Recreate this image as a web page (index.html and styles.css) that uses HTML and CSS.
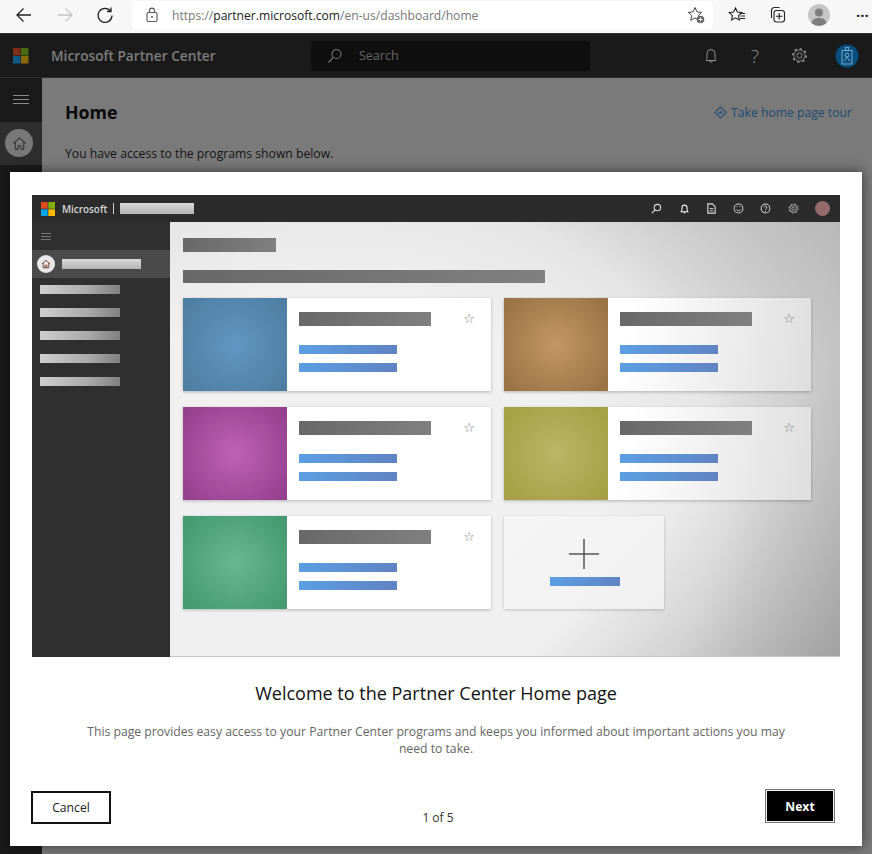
FILE: index.html
```html
<!DOCTYPE html>
<html lang="en">
<head>
  <meta charset="UTF-8" />
  <title>Microsoft Partner Center</title>
  <link rel="stylesheet" href="styles.css">
</head>
<body>
  <div class="browser">
    <button class="nav-btn back"><svg width="18" height="18" viewBox="0 0 18 18"><path d="M16 9H2M8.5 2.5 2 9l6.5 6.5" fill="none" stroke="#222" stroke-width="1.3"/></svg></button>
    <button class="nav-btn forward"><svg width="18" height="18" viewBox="0 0 18 18"><path d="M2 9h14M9.5 2.5 16 9l-6.5 6.5" fill="none" stroke="#c4c4c4" stroke-width="1.3"/></svg></button>
    <button class="nav-btn reload"><svg width="18" height="18" viewBox="0 0 18 18"><path d="M14.6 5.2A7 7 0 1 0 16 9.5M15 1.5v4h-4" fill="none" stroke="#222" stroke-width="1.3"/></svg></button>
    <div class="address">
      <svg class="lock" width="14" height="16" viewBox="0 0 14 16"><rect x="2" y="5.5" width="10" height="9" rx="1.5" fill="none" stroke="#555" stroke-width="1.1"/><path d="M4.5 5.5V3.6a2.5 2.5 0 0 1 5 0v1.9" fill="none" stroke="#555" stroke-width="1.1"/><circle cx="7" cy="10" r="1" fill="#555"/></svg>
      <span class="url">https://<b>partner.microsoft.com</b>/en-us/dashboard/home</span>
      <svg class="fav-add" width="18" height="18" viewBox="0 0 18 18"><path d="M8 1.5l2 4.4 4.7.5-3.5 3.2 1 4.7L8 11.9l-4.2 2.4 1-4.7L1.300 6.400 6 5.900z" fill="none" stroke="#444" stroke-width="1"/><circle cx="13.500" cy="13.500" r="3.800" fill="#666"/><path d="M13.500 11.500v4M11.500 13.500h4" stroke="#fff" stroke-width="1"/></svg>
    </div>
    <div class="tools">
      <svg width="18" height="18" viewBox="0 0 18 18"><path d="M7.500 2l1.900 4.100 4.400.5-3.300 3 .9 4.400-3.900-2.200-3.900 2.200.9-4.400-3.300-3 4.400-.5z" fill="none" stroke="#222" stroke-width="1.100"/><path d="M12 7.500h5M12.500 10h4.500M12 12.500h5" stroke="#222" stroke-width="1"/></svg>
      <svg width="18" height="18" viewBox="0 0 18 18"><path d="M3.500 12V4.500a3 3 0 0 1 3-3h5" fill="none" stroke="#222" stroke-width="1.100"/><rect x="6" y="4.500" width="10.500" height="11.500" rx="2.500" fill="none" stroke="#222" stroke-width="1.100"/><path d="M11.200 7v6.500M8 10.200h6.500" stroke="#222" stroke-width="1.100"/></svg>
      <svg class="person" width="22" height="22" viewBox="0 0 22 22"><circle cx="11" cy="11" r="11" fill="#c6c6c6"/><circle cx="11" cy="8.500" r="4" fill="#7d7d7d"/><path d="M3.500 19c1-4 4-5 7.500-5s6.500 1 7.500 5a11 11 0 0 1-15 0z" fill="#7d7d7d"/></svg>
      <span class="more">···</span>
    </div>
  </div>

  <div class="app">
    <header class="app-head">
      <svg class="ms-logo" width="16" height="16" viewBox="0 0 16 16"><rect width="7.500" height="7.500" fill="#7f2f17"/><rect x="8" width="7.500" height="7.500" fill="#476b10"/><rect y="8" width="7.500" height="7.500" fill="#0f5a82"/><rect x="8" y="8" width="7.500" height="7.500" fill="#8a6a0a"/></svg>
      <span class="app-name">Microsoft Partner Center</span>
      <div class="search">
        <svg width="16" height="16" viewBox="0 0 16 16"><circle cx="9.500" cy="6" r="4.500" fill="none" stroke="#777" stroke-width="1.100"/><path d="M6.300 9.300 1.500 14.500" stroke="#777" stroke-width="1.200"/></svg>
        <span>Search</span>
      </div>
      <div class="head-icons">
        <svg width="16" height="18" viewBox="0 0 16 18"><path d="M3 13.500c1-1 1-2 1-7a4 4 0 0 1 8 0c0 5 0 6 1 7zM6.300 13.500a1.700 1.700 0 0 0 3.400 0" fill="none" stroke="#8f8f8f" stroke-width="1"/></svg>
        <span class="help">?</span>
        <svg width="17" height="17" viewBox="0 0 17 17"><circle cx="8.500" cy="8.500" r="2.600" fill="none" stroke="#8f8f8f"/><circle cx="8.500" cy="8.500" r="5.600" fill="none" stroke="#8f8f8f" stroke-width="1"/><circle cx="8.500" cy="8.500" r="6.800" fill="none" stroke="#8f8f8f" stroke-width="1.600" stroke-dasharray="2.200 3.140"/></svg>
        <svg class="badge" width="24" height="24" viewBox="0 0 24 24"><circle cx="12" cy="12" r="11.500" fill="#054f7e"/><rect x="7" y="6.500" width="10" height="13.500" fill="none" stroke="#7fa6c2"/><circle cx="12" cy="11" r="2" fill="none" stroke="#7fa6c2"/><path d="M9 17.500 12 13l3 4.500M10 3.500h4l-1 3h-2z" fill="none" stroke="#7fa6c2"/></svg>
      </div>
    </header>
    <div class="app-body">
      <nav class="rail">
        <div class="rail-menu"><span></span><span></span><span></span></div>
        <div class="rail-home">
          <div class="rail-circle"><svg width="15" height="15" viewBox="0 0 16 16"><path d="M1.500 8 8 2l6.500 6M3.500 6.500V14h3v-3.500h3V14h3V6.500" fill="none" stroke="#333" stroke-width="1.100"/></svg></div>
        </div>
      </nav>
      <main class="page">
        <div class="page-top">
          <h1>Home</h1>
          <a class="tour"><svg width="13" height="13" viewBox="0 0 14 14"><path d="M7 1l6 6-6 6-6-6z" fill="none" stroke="#1f4a73" stroke-width="1.100"/><path d="M5 9V6.800h3.500M7.300 5l1.700 1.800-1.700 1.800" fill="none" stroke="#1f4a73"/></svg>Take home page tour</a>
        </div>
        <p class="access">You have access to the programs shown below.</p>
      </main>
    </div>
  </div>

  <section class="modal">
    <div class="shot">
      <div class="shot-bar">
        <svg width="14" height="14" viewBox="0 0 14 14"><rect width="6.700" height="6.700" fill="#e04a1f"/><rect x="7.300" width="6.700" height="6.700" fill="#7fb000"/><rect y="7.300" width="6.700" height="6.700" fill="#00a2ec"/><rect x="7.300" y="7.300" width="6.700" height="6.700" fill="#fdb800"/></svg>
        <span class="shot-brand">Microsoft</span>
        <span class="shot-sep"></span>
        <span class="blur-light shot-product"></span>
        <div class="shot-icons">
          <svg width="11" height="11" viewBox="0 0 12 12"><circle cx="7" cy="5" r="3.500" fill="none" stroke="#ddd" stroke-width="1.200"/><path d="M4.500 7.500 1 11" stroke="#ddd" stroke-width="1.300"/></svg>
          <svg width="11" height="11" viewBox="0 0 12 12"><path d="M2.500 9.500c.8-1 .8-2 .8-4.500a2.700 2.700 0 0 1 5.400 0c0 2.500 0 3.500.8 4.500zM5 10.500h2" fill="none" stroke="#eee" stroke-width="1.200"/></svg>
          <svg width="11" height="11" viewBox="0 0 12 12"><path d="M2 1h5l3 3v7H2z" fill="none" stroke="#ddd" stroke-width="1.200"/><path d="M4 6h4M4 8.500h4" stroke="#ddd"/></svg>
          <svg width="11" height="11" viewBox="0 0 12 12"><circle cx="6" cy="6" r="4.800" fill="none" stroke="#ccc" stroke-width="1.100"/><path d="M3.500 7c1 2 4 2 5 0M4 4h1M7 4h1" stroke="#ccc" fill="none"/></svg>
          <svg width="11" height="11" viewBox="0 0 12 12"><circle cx="6" cy="6" r="4.800" fill="none" stroke="#ccc" stroke-width="1.100"/><path d="M4.500 4.800a1.500 1.500 0 1 1 2 1.400L6 7v.6M6 8.500v1" stroke="#ccc" fill="none"/></svg>
          <svg width="11" height="11" viewBox="0 0 12 12"><circle cx="6" cy="6" r="1.700" fill="none" stroke="#bbb"/><circle cx="6" cy="6" r="4" fill="none" stroke="#bbb" stroke-width=".9"/><circle cx="6" cy="6" r="5" fill="none" stroke="#bbb" stroke-width="1" stroke-dasharray="1.900 2.020"/></svg>
          <span class="shot-avatar"></span>
        </div>
      </div>
      <div class="shot-main">
        <aside class="shot-side">
          <div class="shot-burger"><span></span><span></span><span></span></div>
          <div class="shot-active">
            <span class="shot-circle"><svg width="10" height="10" viewBox="0 0 16 16"><path d="M1.500 8 8 2l6.500 6M3.500 6.500V14h9V6.500M6.500 14v-4h3v4" fill="none" stroke="#7a4a40" stroke-width="1.600"/></svg></span>
            <span class="blur-light side-first"></span>
          </div>
          <div class="shot-links">
            <span class="blur-mid"></span>
            <span class="blur-mid"></span>
            <span class="blur-mid"></span>
            <span class="blur-mid"></span>
            <span class="blur-mid"></span>
          </div>
        </aside>
        <div class="shot-content">
          <div class="blur-dark shot-title"></div>
          <div class="blur-dark shot-sub"></div>
          <div class="shot-grid">
            <div class="card"><div class="tile tile-blue"></div><div class="card-body"><span class="blur-dark card-title"></span><span class="blur-blue first"></span><span class="blur-blue"></span><span class="star">☆</span></div></div>
            <div class="card"><div class="tile tile-brown"></div><div class="card-body"><span class="blur-dark card-title"></span><span class="blur-blue first"></span><span class="blur-blue"></span><span class="star">☆</span></div></div>
            <div class="card"><div class="tile tile-purple"></div><div class="card-body"><span class="blur-dark card-title"></span><span class="blur-blue first"></span><span class="blur-blue"></span><span class="star">☆</span></div></div>
            <div class="card"><div class="tile tile-olive"></div><div class="card-body"><span class="blur-dark card-title"></span><span class="blur-blue first"></span><span class="blur-blue"></span><span class="star">☆</span></div></div>
            <div class="card"><div class="tile tile-green"></div><div class="card-body"><span class="blur-dark card-title"></span><span class="blur-blue first"></span><span class="blur-blue"></span><span class="star">☆</span></div></div>
            <div class="add-card">
              <svg width="32" height="32" viewBox="0 0 32 32"><path d="M16 1v30M1 16h30" stroke="#555" stroke-width="1.500"/></svg>
              <span class="blur-blue add-link"></span>
            </div>
          </div>
        </div>
      </div>
    </div>
    <h2>Welcome to the Partner Center Home page</h2>
    <p class="intro">This page provides easy access to your Partner Center programs and keeps you informed about important actions you may need to take.</p>
    <div class="modal-foot">
      <button class="btn-cancel">Cancel</button>
      <span class="step">1 of 5</span>
      <button class="btn-next">Next</button>
    </div>
  </section>
</body>
</html>
```

FILE: styles.css
```css
* { box-sizing: border-box; }
html, body { margin: 0; height: 100%; }
body { width: 872px; height: 854px; overflow: hidden; font-family: "Open Sans", "Noto Sans", sans-serif; background: #7a7a7a; position: relative; }

/* browser chrome */
.browser { height: 33px; background: #f7f7f7; display: flex; align-items: center; padding-bottom: 3px; }
.nav-btn { width: 18px; height: 18px; padding: 0; border: 0; background: none; display: flex; }
.back { margin-left: 15px; }
.forward { margin-left: 23px; }
.reload { margin-left: 22px; }
.address { margin-left: 18px; width: 581px; height: 28px; background: #fff; border-radius: 4px; display: flex; align-items: center; padding: 0 8px 0 13px; }
.lock { flex: none; }
.url { margin-left: 13px; font-size: 12.1px; color: #777; white-space: nowrap; }
.url b { font-weight: 400; color: #222; }
.fav-add { margin-left: auto; }
.tools { display: flex; align-items: center; margin-left: 15px; }
.tools svg { flex: none; }
.tools svg + svg { margin-left: 22px; }
.tools .person { margin-left: 22px; }
.more { margin-left: 26px; font-size: 15px; font-weight: 700; color: #222; letter-spacing: 0; }

/* dimmed page behind the dialog */
.app-head { height: 45px; background: #1a1a1a; border-top: 1px solid #333; border-bottom: 1px solid #2c2c2c; display: flex; align-items: center; }
.ms-logo { margin-left: 13px; flex: none; }
.app-name { margin-left: 22px; font-size: 13.7px; font-weight: 600; color: #7d7d7d; white-space: nowrap; width: 260px; }
.search { width: 279px; height: 30px; background: #0f0f0f; border-radius: 2px; display: flex; align-items: center; padding-left: 16px; color: #666; font-size: 12.5px; gap: 16px; }
.head-icons { margin-left: auto; display: flex; align-items: center; padding-right: 13px; gap: 31px; }
.help { color: #8f8f8f; font-size: 19px; line-height: 20px; width: 10px; font-weight: 300; text-align: center; }
.badge { margin-left: -4px; }

.app-body { display: flex; height: 776px; }
.rail { width: 42px; background: #1a1a1a; flex: none; }
.rail-menu { height: 44px; padding-bottom: 2px; display: flex; flex-direction: column; justify-content: center; align-items: center; gap: 3px; }
.rail-menu span { width: 16px; height: 1px; background: #8a8a8a; }
.rail-home { height: 43px; background: #2e2e2e; padding: 7px 5px; }
.rail-circle { width: 28px; height: 28px; border-radius: 50%; background: #787878; display: flex; align-items: center; justify-content: center; }
.page { flex: 1; padding: 0 20px 0 23px; background: #7a7a7a; }
.page-top { display: flex; justify-content: space-between; align-items: center; height: 67px; }
.page-top h1 { margin: 0; font-size: 17.800px; font-weight: 700; color: #0a0a0a; }
.tour { display: flex; align-items: center; gap: 4px; margin-top: 1px; font-size: 12.200px; color: #1f4a73; }
.access { margin: 0; font-size: 12.200px; color: #151515; }

/* dialog */
.modal { position: absolute; left: 10px; top: 172px; width: 852px; height: 674px; background: #fff; box-shadow: 0 0 12px rgba(0, 0, 0, .55); padding: 23px 22px 0; display: flex; flex-direction: column; }
.modal h2 { margin: 24px 0 0; text-align: center; font-size: 18px; line-height: 24px; font-weight: 500; color: #111; }
.intro { margin: 18px 50px 0; text-align: center; font-size: 12.200px; line-height: 17px; color: #666; }
.modal-foot { margin: 33px 5px 0 -1px; display: flex; justify-content: space-between; align-items: flex-start; }
.btn-cancel, .btn-next { font-family: inherit; font-size: 12.200px; padding: 0; }
.btn-cancel { width: 80px; height: 33px; margin-top: 1px; background: #fff; border: 2px solid #111; color: #222; }
.btn-next { width: 70px; height: 34px; margin-top: -1px; background: #000; border: 1px solid #777; box-shadow: inset 0 0 0 1px #eee; color: #fff; font-weight: 700; }
.step { margin-top: 20px; font-size: 12px; line-height: 16px; color: #333; }

/* screenshot inside the dialog */
.shot { width: 808px; height: 462px; flex: none; display: flex; flex-direction: column; }
.shot-bar { height: 27px; background: #2b2b2b; display: flex; align-items: center; padding-left: 9px; flex: none; }
.shot-brand { margin-left: 7px; font-size: 9.900px; font-weight: 600; color: #d8d8d8; }
.shot-sep { width: 1px; height: 11px; background: #cfcfcf; margin: 0 6px; }
.shot-product { width: 74px; height: 11px; }
.shot-icons { margin-left: auto; display: flex; align-items: center; gap: 16.300px; padding-right: 10px; }
.shot-avatar { width: 15px; height: 15px; border-radius: 50%; background: #956a6a; }

.blur-light { display: block; background: linear-gradient(180deg, #d8d8d8, #b4b4b4); }
.blur-mid { display: block; width: 80px; height: 9px; background: linear-gradient(100deg, #cfcfcf, #aaa 60%, #808080); }
.blur-dark { display: block; background: linear-gradient(95deg, #686868, #808080); }
.blur-blue { display: block; width: 98px; height: 9px; margin-top: 9px; background: linear-gradient(100deg, #5b9fe3, #6083c2); }

.shot-main { flex: 1; display: flex; min-height: 0; }
.shot-side { width: 138px; background: #2f2f2f; flex: none; }
.shot-burger { height: 28px; padding: 11px 0 0 9px; display: flex; flex-direction: column; gap: 2px; }
.shot-burger span { width: 10px; height: 1px; background: #777; }
.shot-active { height: 28px; background: #4a4a4a; display: flex; align-items: center; padding-left: 5px; gap: 7px; }
.shot-circle { width: 18px; height: 18px; border-radius: 50%; background: #e8e8e8; display: flex; align-items: center; justify-content: center; }
.side-first { width: 79px; height: 10px; }
.shot-links { padding: 7px 0 0 8px; display: flex; flex-direction: column; gap: 14px; }

.shot-content { flex: 1; padding: 16px 0 0 13px; background: linear-gradient(135deg, transparent 72%, rgba(0, 0, 0, .18)), radial-gradient(ellipse 640px 520px at 168px 280px, #f0f0f0 40%, #e6e6e6 60%, #d8d8d8 68%, #c8c8c8 80%, #b8b8b8 95%); border-bottom: 1px solid #c4c4c4; }
.shot-title { width: 93px; height: 14px; }
.shot-sub { width: 362px; height: 13px; margin-top: 18px; }
.shot-grid { margin-top: 15px; display: grid; grid-template-columns: 308px 307px; grid-auto-rows: 93px; column-gap: 13px; row-gap: 16px; }
.card { display: flex; background: linear-gradient(100deg, #fff 40%, #dedede); box-shadow: 0 1px 3px rgba(0, 0, 0, .25); }
.card:nth-child(odd) { background: #fff; }
.tile { width: 104px; flex: none; }
.tile-blue { background: radial-gradient(circle, #6097c2, #4f7ea3 90%); }
.tile-brown { background: radial-gradient(circle, #c49666, #9a7345 90%); }
.tile-purple { background: radial-gradient(circle, #bf62b5, #964090 90%); }
.tile-olive { background: radial-gradient(circle, #bcb565, #a5a045 90%); }
.tile-green { background: radial-gradient(circle, #67b893, #459a70 90%); }
.card-body { flex: 1; padding: 14px 0 0 12px; position: relative; }
.card-title { width: 132px; height: 14px; }
.blur-blue.first { margin-top: 19px; }
.star { position: absolute; right: 16px; top: 13px; font-size: 13px; line-height: 16px; color: #777; font-family: "DejaVu Sans", sans-serif; }
.add-card { width: 160px; background: linear-gradient(135deg, #f6f6f6, #f0f0f0); box-shadow: 0 1px 3px rgba(0, 0, 0, .2); display: flex; flex-direction: column; align-items: center; padding-top: 22px; }
.add-card svg { margin-left: -1px; }
.blur-blue.add-link { width: 70px; margin-top: 7px; margin-left: 2px; }
```
